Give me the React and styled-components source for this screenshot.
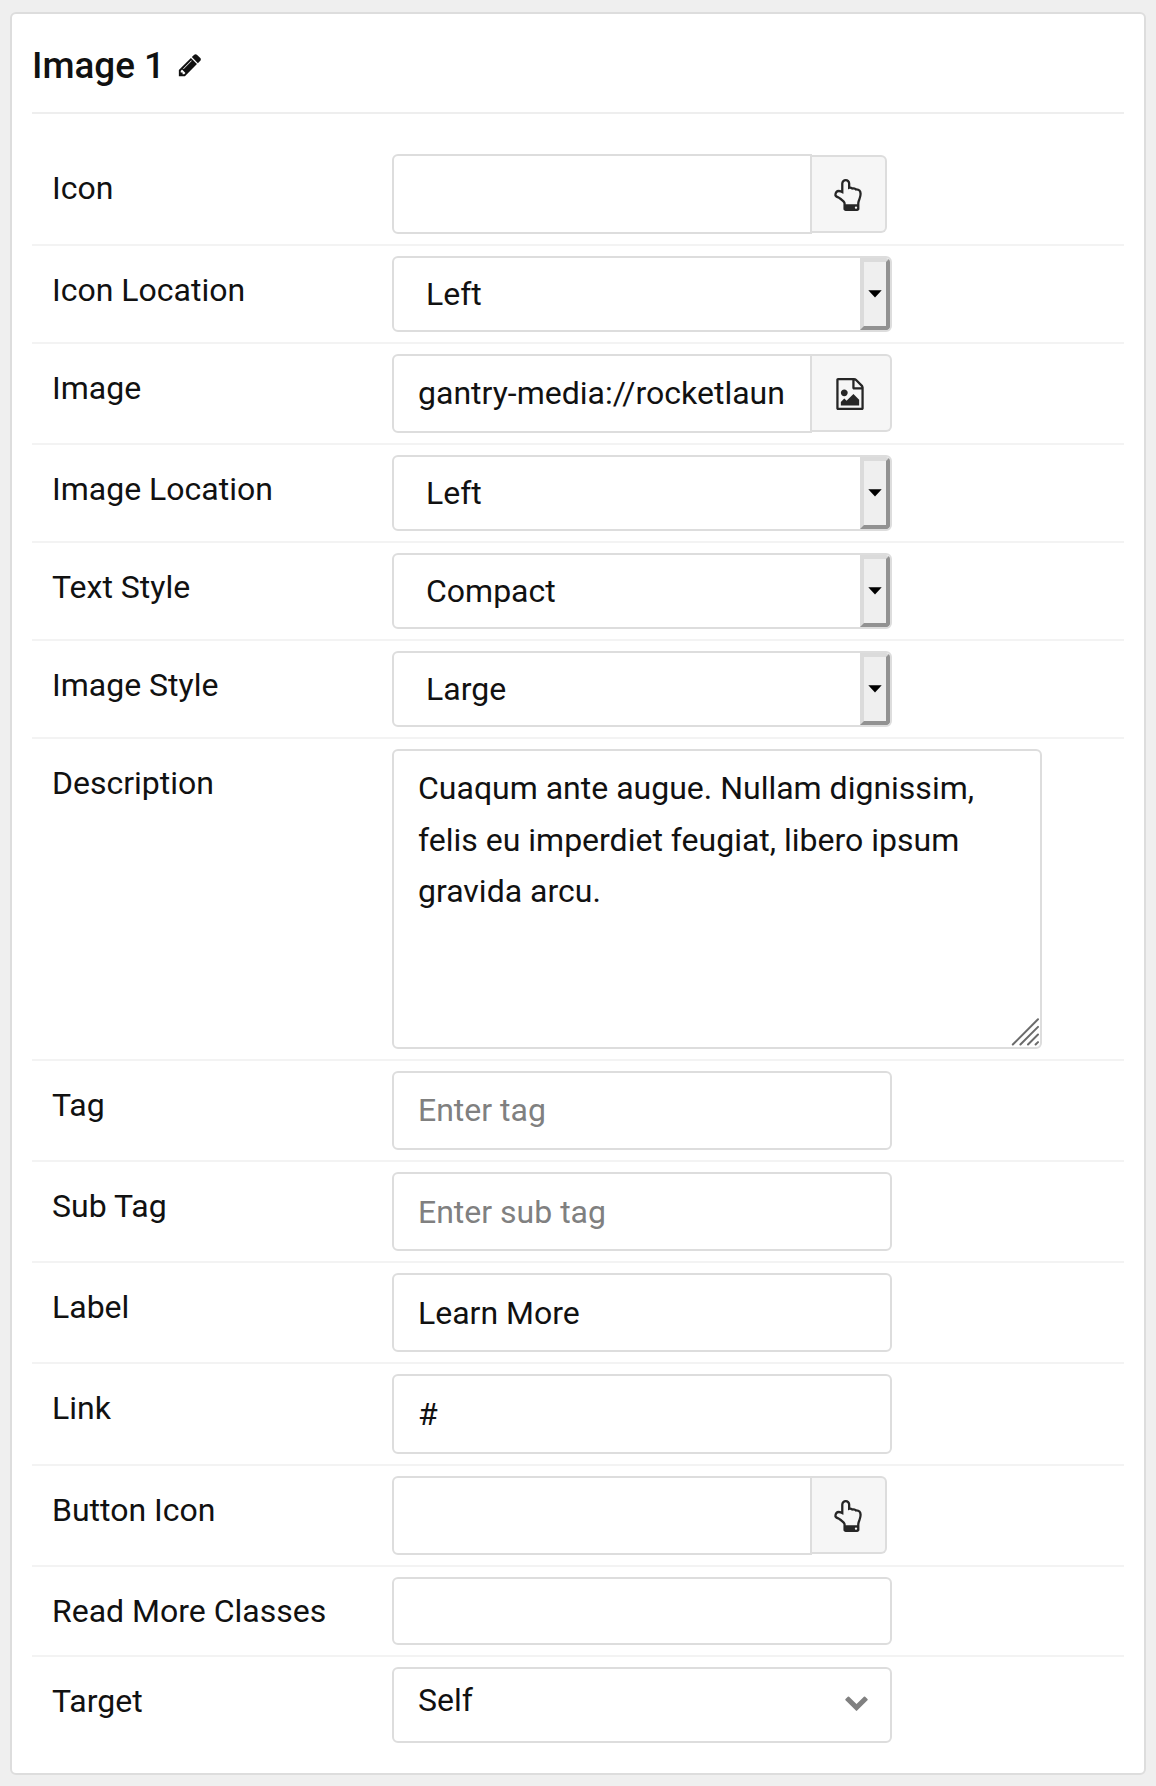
import React from "react";
import styled, { createGlobalStyle, css } from "styled-components";

const GlobalStyle = createGlobalStyle`
  * { box-sizing: border-box; }
  body {
    margin: 0;
    background: #efefef;
    color: #111;
    font-family: Roboto, "Liberation Sans", sans-serif;
    font-size: 32px;
    line-height: 51.2px;
  }
`;

const Page = styled.main`
  padding: 12px 10px 11px;
`;

const Card = styled.section`
  height: 1763px;
  padding: 0 20px;
  background: #fff;
  border: 2px solid #ddd;
  border-radius: 6px;
`;

const CardHeader = styled.header`
  display: flex;
  align-items: center;
  gap: 12px;
  height: 100px;
  border-bottom: 2px solid #eee;
`;

const Title = styled.h4`
  margin: 6px 0 0;
  font-size: 36.8px;
  font-weight: 500;
  line-height: 60px;
`;

const Fields = styled.div`
  padding-top: 30px;
`;

const Row = styled.div`
  display: grid;
  grid-template-columns: 360px 1fr;
  align-items: start;
  padding: 10px 0;
  border-bottom: 2px solid #f3f3f3;

  &:last-child { border-bottom: 0; }
`;

const Label = styled.label`
  padding: 9px 0 0 20px;
  white-space: nowrap;
`;

const frame = css`
  border: 2px solid #ddd;
  border-radius: 6px;
  background: #fff;
`;

const TextInput = styled.input`
  ${frame}
  display: block;
  width: ${(p) => p.$width || 500}px;
  height: ${(p) => p.$height || 79}px;
  padding: 0 24px ${(p) => p.$lift || 0}px;
  color: #111;
  font: inherit;
  outline: 0;
  ${(p) => p.$joined && "border-radius: 6px 0 0 6px;"}

  &::placeholder { color: #808080; opacity: 1; }
`;

const InputGroup = styled.div`
  display: flex;
  align-items: ${(p) => p.$align || "flex-start"};
`;

const PickerButton = styled.button`
  display: flex;
  align-items: center;
  justify-content: center;
  width: ${(p) => p.$width}px;
  height: 78px;
  padding: 0 2px 0 0;
  background: #f6f6f6;
  border: 2px solid #ddd;
  border-left: 0;
  border-radius: 0 6px 6px 0;
  color: #262626;
`;

const SelectBox = styled.div`
  ${frame}
  display: flex;
  align-items: center;
  width: 500px;
  height: 76px;
  padding-left: 32px;
  overflow: hidden;
`;

const SelectText = styled.span`
  flex: 1;
  padding-top: 2px;
`;

const DropHandle = styled.span`
  display: flex;
  align-items: center;
  justify-content: center;
  width: 30px;
  height: 72px;
  background: #efefef;
  border: 4px solid;
  border-color: #dbdbdb #929292 #929292 #dbdbdb;
  border-radius: 0 4px 4px 0;
`;

const TargetBox = styled(SelectBox)`
  padding: 0 21px 0 24px;
`;

const TargetText = styled(SelectText)`
  padding-bottom: 10px;
`;

const AreaWrap = styled.div`
  position: relative;
  width: 650px;
  height: 300px;
`;

const TextArea = styled.textarea`
  ${frame}
  display: block;
  width: 100%;
  height: 100%;
  padding: 12.4px 24px 12px;
  color: #111;
  font: inherit;
  outline: 0;
  resize: none;
`;

const Grip = styled.svg`
  position: absolute;
  right: 3px;
  bottom: 3px;
`;

const paths = {
  pencil:
    "M491 1536l91-91-235-235-91 91v107h128v128h107zm523-928q0-22-22-22-10 0-17 7l-542 542q-7 7-7 17 0 22 22 22 10 0 17-7l542-542q7-7 7-17zm-54-192l416 416-832 832h-416v-416zm683 96q0 53-37 90l-166 166-416-416 166-165q36-38 90-38 53 0 91 38l235 234q37 39 37 91z",
  hand:
    "M1408 1600q0-26-19-45t-45-19-45 19-19 45 19 45 45 19 45-19 19-45zm128-764q0-189-167-189-26 0-56 5-16-30-52.5-47.5t-73.5-17.5-69 18q-50-53-119-53-25 0-55.5 10t-47.5 25v-331q0-52-38-90t-90-38q-51 0-89.5 39t-38.5 89v576q-20 0-48.5-15t-55-33-68-33-84.5-15q-67 0-97.5 44.5t-30.5 115.5q0 24 139 90 44 24 65 37 64 40 145 112 81 71 106 101 57 69 57 140v32h640v-32q0-72 32-167t64-193.5 32-179.5zm128-5q0 133-69 322-59 164-59 223v288q0 53-37.5 90.5t-90.5 37.5h-640q-53 0-90.5-37.5t-37.5-90.5v-288q0-10-4.5-21.5t-14-23.5-18-22.5-22.5-24-21.5-20.5-21.5-19-17-14q-74-65-129-100-21-13-62-33t-72-37-63-40.5-49.5-55-17.5-69.5q0-125 67-206.5t189-81.5q68 0 128 22v-374q0-104 77-180t179-76q105 0 181 75.5t76 180.5v169q62 4 119 37 21-3 43-3 101 0 178 60 139-1 219.5 85t80.5 227z",
  image:
    "M1596 380q28 28 48 76t20 88v1152q0 40-28 68t-68 28h-1344q-40 0-68-28t-28-68v-1600q0-40 28-68t68-28h896q40 0 88 20t76 48zm-444-244v376h376q-10-29-22-41l-313-313q-12-12-41-22zm384 1528v-1024h-416q-40 0-68-28t-28-68v-416h-768v1536h1280zm-128-448v320h-1024v-192l192-192 128 128 384-384zm-832-192q-80 0-136-56t-56-136 56-136 136-56 136 56 56 136-56 136-136 56z",
  chevron:
    "M1683 808l-742 741q-19 19-45 19t-45-19l-742-741q-19-19-19-45.5t19-45.5l166-165q19-19 45-19t45 19l531 531 531-531q19-19 45-19t45 19l166 165q19 19 19 45.5t-19 45.5z",
};

const IconSvg = styled.svg`
  flex: none;
  fill: ${(p) => p.$color || "currentColor"};
  margin-top: ${(p) => p.$drop || 0}px;
`;

const Icon = ({ name, size, color, drop }) => (
  <IconSvg width={size} height={size} viewBox="0 0 1792 1792" $color={color} $drop={drop}>
    <path d={paths[name]} />
  </IconSvg>
);

const Field = ({ label, children }) => (
  <Row>
    <Label>{label}</Label>
    {children}
  </Row>
);

const Select = ({ value }) => (
  <SelectBox>
    <SelectText>{value}</SelectText>
    <DropHandle>
      <svg width="14" height="8" viewBox="0 0 14 8">
        <path d="M0.3 0.3H13.7L7 7.6Z" fill="#000" />
      </svg>
    </DropHandle>
  </SelectBox>
);

const Picker = ({ value = "", icon, height, width, align }) => (
  <InputGroup $align={align}>
    <TextInput $joined $width={420} $height={height} $lift={2} defaultValue={value} />
    <PickerButton $width={width} type="button">
      <Icon name={icon} size={32} drop={2} />
    </PickerButton>
  </InputGroup>
);

export default function App() {
  return (
    <Page>
      <GlobalStyle />
      <Card>
        <CardHeader>
          <Title>Image 1</Title>
          <Icon name="pencil" size={26} drop={4} />
        </CardHeader>
        <Fields>
          <Field label="Icon">
            <Picker icon="hand" height={80} width={75} align="center" />
          </Field>
          <Field label="Icon Location">
            <Select value="Left" />
          </Field>
          <Field label="Image">
            <Picker icon="image" value="gantry-media://rocketlaun" width={80} />
          </Field>
          <Field label="Image Location">
            <Select value="Left" />
          </Field>
          <Field label="Text Style">
            <Select value="Compact" />
          </Field>
          <Field label="Image Style">
            <Select value="Large" />
          </Field>
          <Field label="Description">
            <AreaWrap>
              <TextArea defaultValue="Cuaqum ante augue. Nullam dignissim, felis eu imperdiet feugiat, libero ipsum gravida arcu." />
              <Grip width="28" height="28" viewBox="0 0 28 28">
                <path
                  d="M1.8 26.5L27 1.3M9.4 26.5L27 8.9M17 26.5L27 16.5M24.6 26.5L27 24.1"
                  stroke="#6b6b6b"
                  strokeWidth="2"
                  strokeLinecap="round"
                  fill="none"
                />
              </Grip>
            </AreaWrap>
          </Field>
          <Field label="Tag">
            <TextInput $lift={2} placeholder="Enter tag" />
          </Field>
          <Field label="Sub Tag">
            <TextInput placeholder="Enter sub tag" />
          </Field>
          <Field label="Label">
            <TextInput defaultValue="Learn More" />
          </Field>
          <Field label="Link">
            <TextInput $height={80} $lift={1} defaultValue="#" />
          </Field>
          <Field label="Button Icon">
            <Picker icon="hand" width={75} />
          </Field>
          <Field label="Read More Classes">
            <TextInput $height={68} />
          </Field>
          <Field label="Target">
            <TargetBox>
              <TargetText>Self</TargetText>
              <Icon name="chevron" size={25} color="#808080" drop={-8} />
            </TargetBox>
          </Field>
        </Fields>
      </Card>
    </Page>
  );
}
